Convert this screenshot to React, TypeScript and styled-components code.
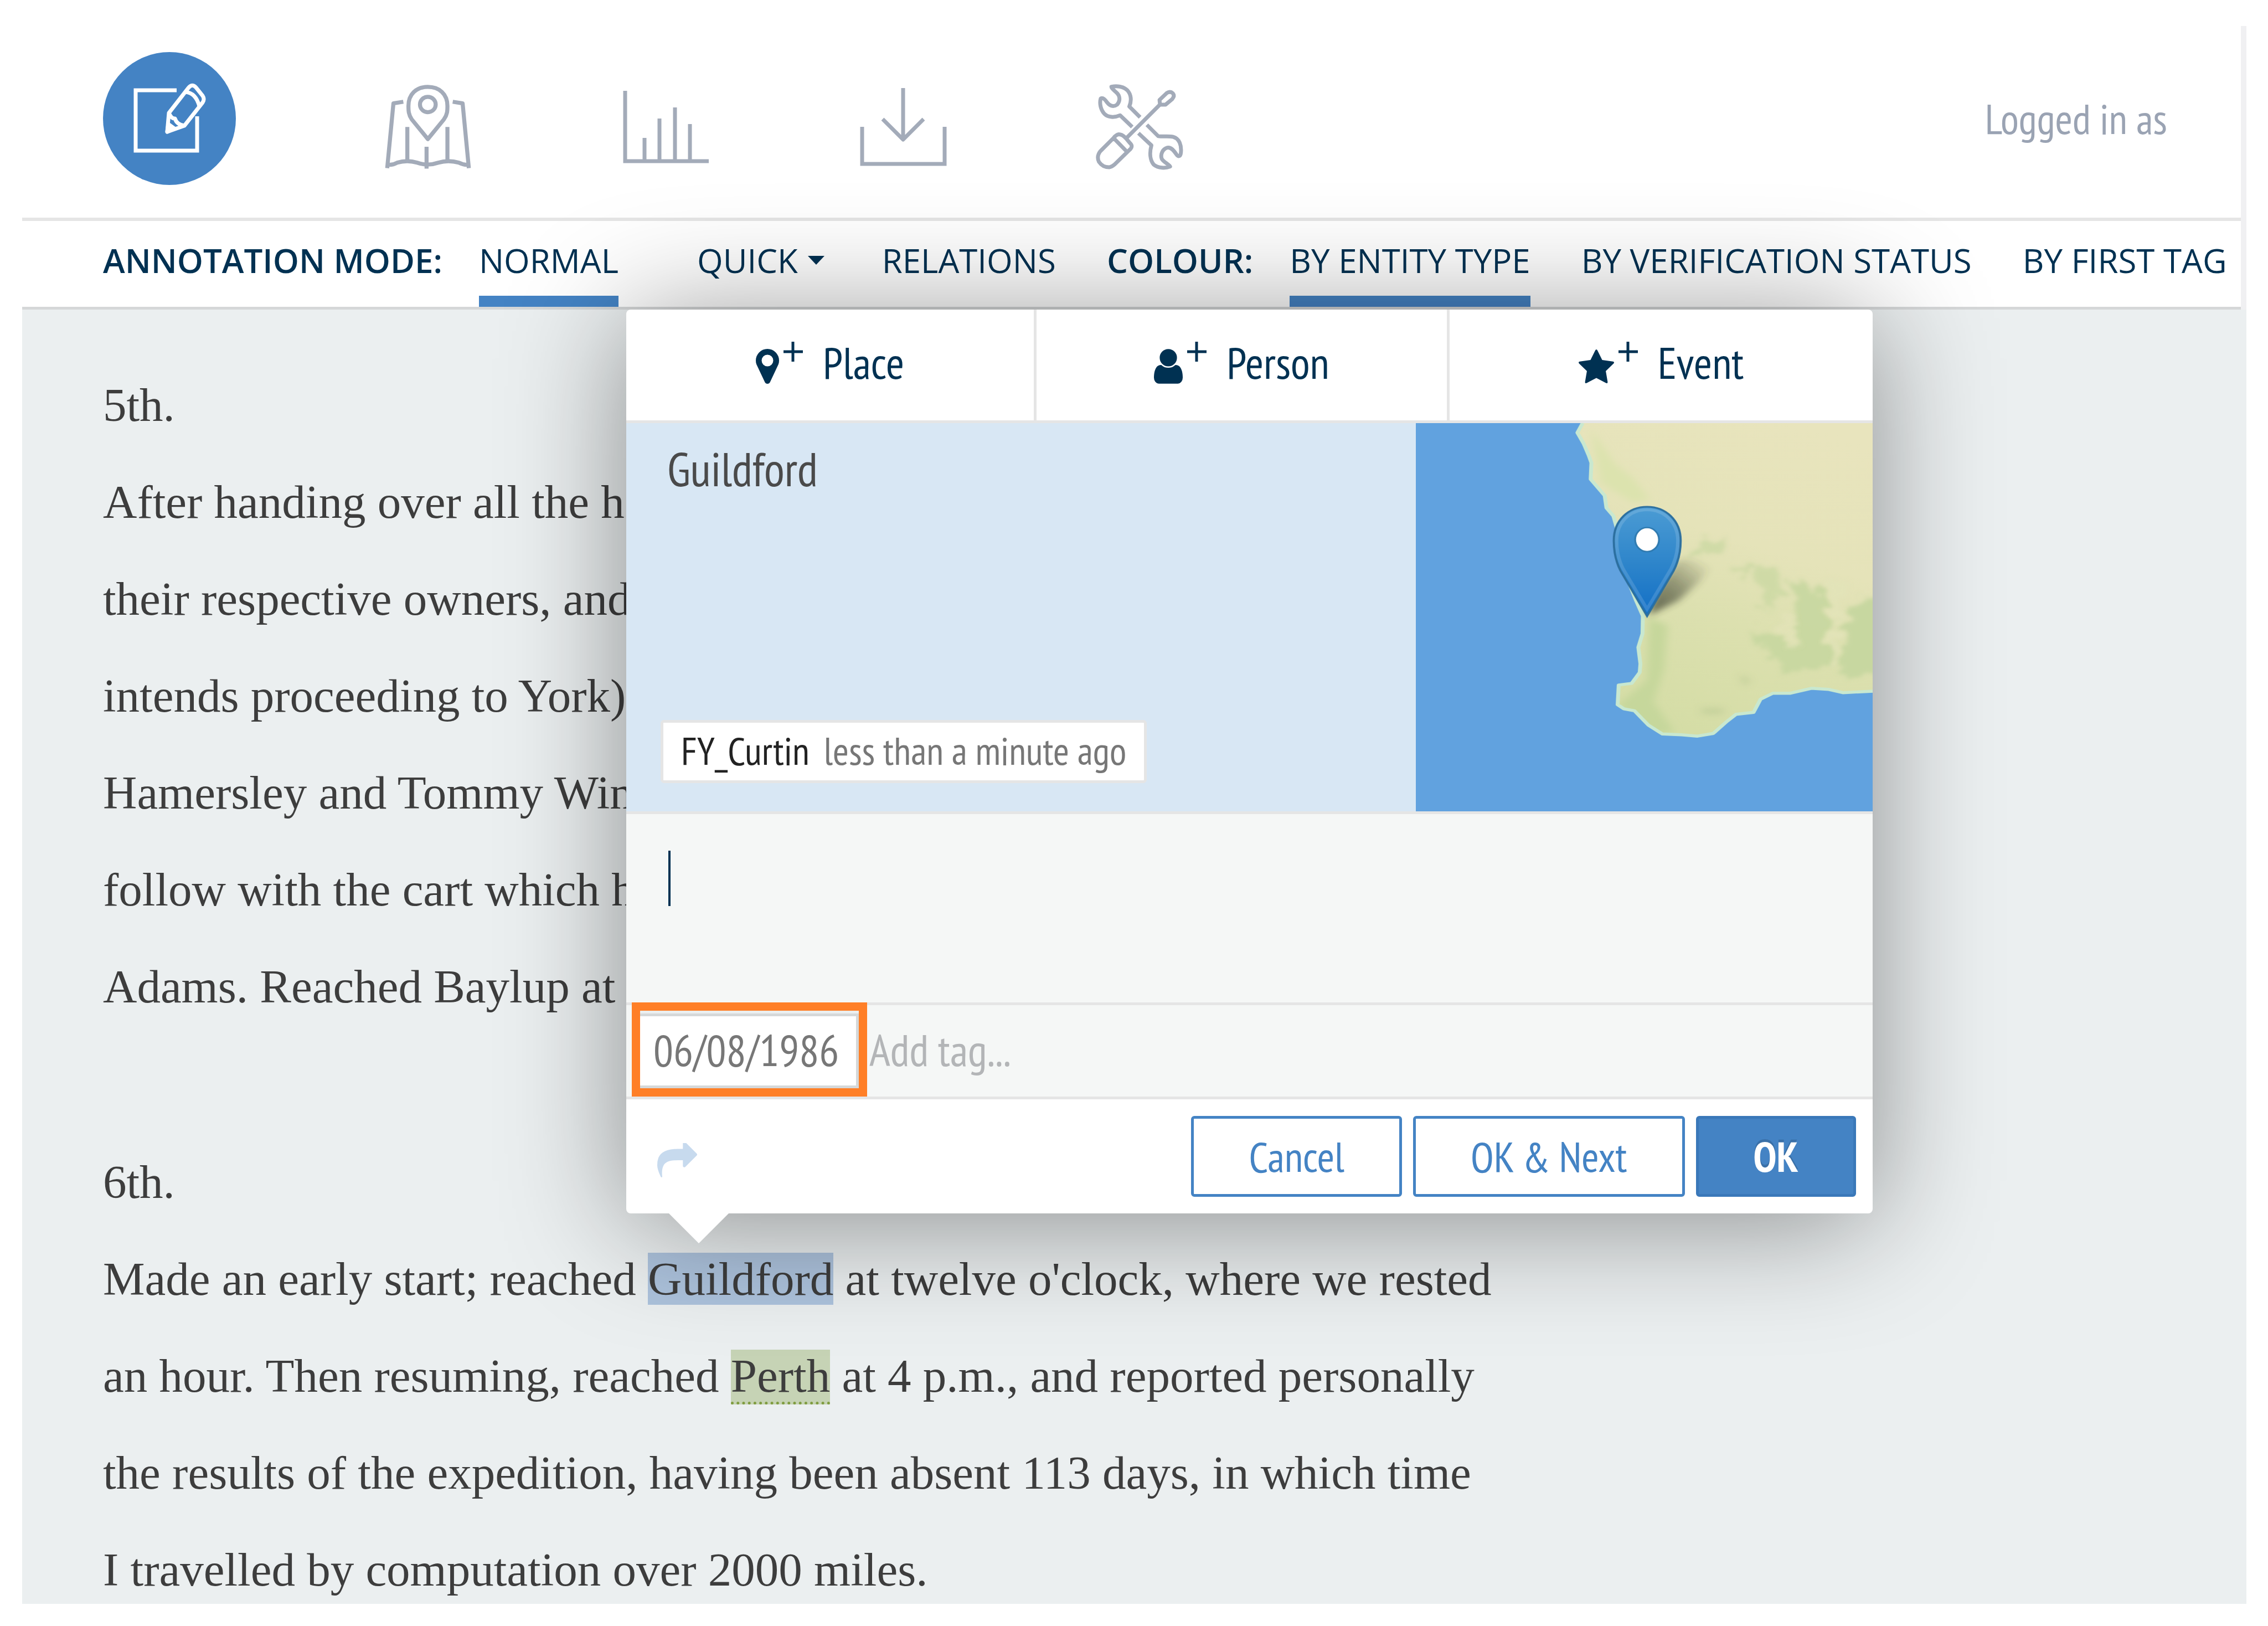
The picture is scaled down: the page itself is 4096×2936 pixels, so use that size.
import React from 'react';
import styled, { createGlobalStyle, css } from 'styled-components';

const navy = '#003152';
const blue = '#4483c4';
const iconGrey = '#a3abb9';
const rule = '#e5e5e5';
const canvasBg = '#ebeff0';
const narrow = '"PT Sans Narrow", "Roboto Condensed", sans-serif';
const humanist = '"Open Sans", sans-serif';

const Global = createGlobalStyle`
  *, *::before, *::after { box-sizing: border-box; }
  body { margin: 0; background: #fff; }
  button, input, textarea { font: inherit; margin: 0; border-radius: 0; }
`;

const Page = styled.div`
  display: flex;
  flex-direction: column;
  height: 100vh;
  padding: 47px 39px 40px 40px;
  background: #fff;
`;

const Shell = styled.div`
  display: flex;
  flex: 1;
  flex-direction: column;
  min-height: 0;
  border-right: 10px solid #f0f0f2;
`;

const Header = styled.header`
  display: flex;
  align-items: center;
  justify-content: space-between;
  padding: 47px 133px 59px 146px;
  border-bottom: 6px solid ${rule};
`;

const MainNav = styled.nav`
  display: flex;
  gap: 268px;
`;

const NavLink = styled.a<{ $active?: boolean }>`
  display: flex;
  align-items: center;
  justify-content: center;
  height: 240px;
  width: 160px;
  padding-top: 31px;
  color: ${iconGrey};
  ${p =>
    p.$active &&
    css`
      width: 240px;
      padding-top: 0;
      border-radius: 50%;
      background: ${blue};
      color: #fff;
    `}
`;

const Account = styled.span`
  font: 76px/240px ${narrow};
  color: #9aa3b3;
  white-space: nowrap;
`;

const ToolBar = styled.div`
  display: flex;
  gap: 92px;
  padding-left: 146px;
  border-bottom: 5px solid #d5d7d8;
  font: 60px/128px ${humanist};
  color: ${navy};
  white-space: nowrap;
`;

const ToolGroup = styled.div`
  display: flex;
  gap: 92px;
`;

const ToolLabel = styled.span`
  padding-top: 7px;
  margin-right: -26px;
  font-weight: 600;
`;

const ToolItem = styled.a<{ $active?: boolean }>`
  height: 155px;
  padding-top: 7px;
  border-bottom: 20px solid ${p => (p.$active ? blue : 'transparent')};
  color: inherit;
  text-decoration: none;
`;

const ToolMenu = styled.button`
  display: flex;
  align-items: center;
  gap: 18px;
  height: 135px;
  padding: 7px 12px 0 50px;
  border: 0;
  background: none;
  color: inherit;
`;

const Workspace = styled.main`
  position: relative;
  display: flex;
  flex: 1;
  min-height: 0;
  margin-right: -10px;
`;

const Document = styled.article`
  flex: 1;
  overflow: hidden;
  padding: 85px 146px 0;
  background: ${canvasBg};
  font: 85px/175px "Liberation Serif", "Times New Roman", serif;
  color: #3d3d3d;
  white-space: nowrap;
`;

const Entry = styled.p`
  margin: 0 0 178px;
`;

const Selection = styled.span`
  background: #adc3dd;
`;

const PlaceMark = styled.span`
  background: #c6d3b5;
  border-bottom: 5px dotted #7f9c40;
`;

const Popup = styled.section`
  position: absolute;
  top: 0;
  left: 1091px;
  width: 2251px;
  border-radius: 8px;
  background: #fff;
  box-shadow: 0 15px 220px rgba(0, 0, 0, 0.42);
  font: 80px/100px ${narrow};
  color: ${navy};
  white-space: nowrap;
`;

const Pointer = styled.span`
  position: absolute;
  top: 100%;
  left: 77px;
  border: 54px solid transparent;
  border-top-color: #fff;
  border-bottom-width: 0;
`;

const Tabs = styled.div`
  display: grid;
  grid-template-columns: 741fr 746fr 764fr;
  border-bottom: 5px solid ${rule};
`;

const Tab = styled.button`
  display: flex;
  align-items: center;
  justify-content: center;
  height: 200px;
  padding: 0 0 9px;
  border: 0;
  border-right: 5px solid ${rule};
  background: none;
  color: inherit;
  &:last-child { border-right: 0; }
`;

const TabGlyph = styled.span`
  display: flex;
  align-items: flex-end;
  gap: 8px;
  height: 76px;
  margin-right: 36px;
`;

const PlusGlyph = styled.svg`
  align-self: flex-start;
`;

const PlacePanel = styled.div`
  display: flex;
  border-bottom: 5px solid ${rule};
  background: #d8e7f4;
`;

const PlaceInfo = styled.div`
  display: flex;
  flex: 1;
  flex-direction: column;
  align-items: flex-start;
  justify-content: space-between;
  padding: 32px 62px 51px;
`;

const Quote = styled.span`
  padding-left: 12px;
  font-size: 85px;
  color: #4a4a4a;
`;

const Stamp = styled.div`
  display: flex;
  gap: 26px;
  padding: 0 32px 4px;
  border: 5px solid ${rule};
  border-radius: 6px;
  background: #fff;
  font-size: 70px;
  color: #777;
`;

const Author = styled.span`
  color: #222;
`;

const Comment = styled.label`
  display: flex;
  height: 345px;
  padding: 66px 76px;
  border-bottom: 5px solid ${rule};
  background: #f5f7f6;
`;

const Caret = styled.span`
  width: 4px;
  height: 100px;
  background: ${navy};
`;

const CommentBox = styled.textarea`
  flex: 1;
  border: 0;
  outline: 0;
  padding: 0;
  resize: none;
  background: none;
  color: inherit;
`;

const TagRow = styled.div`
  display: flex;
  height: 170px;
  padding-left: 10px;
  border-bottom: 5px solid ${rule};
  background: #f5f7f6;
`;

const TagFrame = styled.div`
  width: 425px;
  height: 170px;
  margin-top: -5px;
  padding-top: 5px;
  border: 15px solid #ff7f27;
  background: ${canvasBg};
`;

const Tag = styled.span`
  display: block;
  padding: 0 0 4px 24px;
  border: 5px solid #d5d8d9;
  border-left: 0;
  background: #fff;
  line-height: 121px;
  color: #777;
`;

const TagInput = styled.input`
  flex: 1;
  min-width: 0;
  padding: 0 4px 4px;
  border: 0;
  outline: 0;
  background: none;
  &::placeholder { color: #b3b5b7; opacity: 1; }
`;

const Footer = styled.footer`
  display: flex;
  align-items: center;
  gap: 20px;
  padding: 30px;
`;

const ReplyButton = styled.button`
  display: flex;
  margin-right: auto;
  padding: 13px 26px 0;
  border: 0;
  background: none;
  color: #c7daee;
`;

const Action = styled.button<{ $primary?: boolean }>`
  height: 146px;
  padding: 0 99px;
  border: 5px solid ${blue};
  border-radius: 6px;
  background: #fff;
  color: ${blue};
  font-size: 76px;
  white-space: nowrap;
  ${p =>
    p.$primary &&
    css`
      border-color: #3a78b9;
      background: ${blue};
      color: #fff;
      font-weight: 700;
      text-shadow: 0 -5px 0 #3a70a8;
    `}
`;

const Line = ({ size = 160, box = '0 0 160 160', width = 7, children }: any) => (
  <svg width={size} height={size} viewBox={box} fill="none" stroke="currentColor" strokeWidth={width} strokeLinejoin="round">
    {children}
  </svg>
);

const EditIcon = () => (
  <Line size={240} box="0 0 240 240">
    <path d="M133 69H59V178H170V116" strokeLinejoin="miter" />
    <path d="M116 144L119 110L154 65Q161 56 168 64L180 79Q184 85 180 91L147 133Z" />
    <path d="M119 110Q124 121 130 120Q133 131 147 133M149 72Q168 74 174 98" />
    <path d="M116 144L118 130L129 138Z" fill="currentColor" />
  </Line>
);

const MapIcon = () => (
  <Line box="60 90 484 484" width={22}>
    <path d="M298 396L210 288C192 262 192 240 192 215C192 150 235 111 298 111C361 111 405 150 405 215C405 240 405 262 386 288Z" />
    <ellipse cx="298" cy="207" rx="43" ry="42" />
    <path d="M164 192L110 201L76 555M434 192L488 201L522 555" />
    <path d="M73 535Q104 540 130 525Q185 508 240 525Q298 545 355 525Q410 508 468 525Q496 540 525 535" />
    <path d="M186 330V515M405 330V515M291 438V557" />
  </Line>
);

const ChartIcon = () => (
  <Line>
    <path d="M7 14V141H158" strokeLinejoin="miter" />
    <path d="M42 99V140M69 64V140M97 44V140M124 74V140" />
  </Line>
);

const DownloadIcon = () => (
  <Line>
    <path d="M7 79V146H156V79" strokeLinejoin="miter" />
    <path d="M81 9V101M44 65L81 102L118 65" />
  </Line>
);

const ToolsIcon = () => (
  <Line box="136 90 484 484" width={21}>
    <path d="M381 277L322 218C336 185 332 152 312 130C290 108 255 104 224 110C224 122 242 130 258 148C274 168 270 192 255 208C236 222 216 216 200 195C190 180 178 168 166 174C158 202 166 236 186 258C206 278 240 280 272 266L338 330" />
    <path d="M418 318L480 380C510 384 535 378 562 384C596 394 608 430 604 470C602 492 590 494 580 480C566 460 550 438 530 443C504 450 490 480 500 505C512 524 534 530 545 546C520 556 480 556 455 535C435 510 432 470 443 430L372 364" />
    <path d="M305 392L492 205" />
    <path d="M490 208L487 182L526 145Q545 132 560 146Q572 160 556 178L520 208Z" />
    <path d="M265 370Q250 372 236 390L164 462Q142 490 156 520Q176 550 212 550Q226 548 240 536L322 456Q346 436 326 418L304 392Q284 370 265 370ZM238 392L308 464" />
  </Line>
);

const Plus = () => (
  <PlusGlyph width="35" height="36" viewBox="0 0 35 36" stroke={navy} strokeWidth="5" aria-hidden>
    <path d="M0 18H35M17 0V36" />
  </PlusGlyph>
);

const markerPath =
  'M1152 640q0-106-75-181t-181-75-181 75-75 181 75 181 181 75 181-75 75-181zm256 0q0 109-33 179l-364 774q-16 33-47.5 52t-67.5 19-67.5-19-46.5-52l-365-774q-33-70-33-179 0-212 150-362t362-150 362 150 150 362z';
const userPath =
  'M1536 1399q0 109-62.5 187t-150.5 78h-854q-88 0-150.5-78t-62.5-187q0-85 8.5-160.5t31.5-152 58.5-131 94-89 134.5-34.5q131 128 313 128t313-128q76 0 134.5 34.5t94 89 58.5 131 31.5 152 8.5 160.5zm-256-887q0 159-112.5 271.5t-271.5 112.5-271.5-112.5-112.5-271.5 112.5-271.5 271.5-112.5 271.5 112.5 112.5 271.5z';
const starPath =
  'M1728 647q0 22-26 48l-363 354 86 500q1 7 1 20 0 21-10.5 35.5t-30.5 14.5q-19 0-40-12l-449-236-449 236q-22 12-40 12-21 0-31.5-14.5t-10.5-35.5q0-6 2-20l86-500-364-354q-25-27-25-48 0-37 56-46l502-73 225-455q19-41 49-41t49 41l225 455 502 73q56 9 56 46z';
const sharePath =
  'M1792 640q0 26-19 45l-512 512q-19 19-45 19t-45-19-19-45v-256h-224q-98 0-175.5 6t-154 21.5-133 42.5-105.5 69.5-80 101-48.5 138.5-17.5 181q0 55 5 123 0 6 2.5 23.5t2.5 26.5q0 15-8.5 25t-23.5 10q-16 0-28-17-7-9-13-22t-13.5-30-10.5-24q-127-285-127-451 0-199 53-333 162-403 875-403h224v-256q0-26 19-45t45-19 45 19l512 512q19 19 19 45z';

const Solid = ({ w, h, box, d }: { w: number; h: number; box: string; d: string }) => (
  <svg width={w} height={h} viewBox={box} fill="currentColor" aria-hidden>
    <path d={d} />
  </svg>
);

const tabs = [
  { name: 'Place', icon: <Solid w={42} h={63} box="384 128 1024 1536" d={markerPath} /> },
  { name: 'Person', icon: <Solid w={52} h={63} box="256 128 1280 1536" d={userPath} /> },
  { name: 'Event', icon: <Solid w={64} h={63} box="64 32 1664 1587" d={starPath} /> },
];

const coast =
  'M597 60L582 95L600 135L615 180L622 205L620 265L640 295L660 325L665 370L685 400L696 450L705 560L722 620L750 710L769 765L768 830L756 880L762 940L760 972L737 1012L700 1018L697 1090L715 1105L745 1112L785 1165L825 1197L880 1200L925 1205L970 1195L1010 1150L1035 1125L1085 1118L1105 1070L1140 1048L1190 1048L1250 1030L1300 1034L1340 1046L1435 1040';

const CoastMap = () => (
  <svg width="825" height="701" viewBox="121 60 1304 1420" preserveAspectRatio="none" role="img" aria-label="Map of Guildford">
    <defs>
      <linearGradient id="land" x1="0.75" y1="0" x2="0.45" y2="1">
        <stop offset="0" stopColor="#e8e4bd" />
        <stop offset="0.4" stopColor="#e5e3b9" />
        <stop offset="0.65" stopColor="#dce0af" />
        <stop offset="1" stopColor="#d5dda6" />
      </linearGradient>
      <linearGradient id="pin" x1="0" y1="0" x2="0" y2="1">
        <stop offset="0" stopColor="#4c9cd4" />
        <stop offset="0.5" stopColor="#2f86cb" />
        <stop offset="1" stopColor="#126fc6" />
      </linearGradient>
      <linearGradient id="cast" x1="0" y1="1" x2="0.9" y2="0">
        <stop offset="0" stopColor="#3c4030" stopOpacity="0.8" />
        <stop offset="0.5" stopColor="#3c4030" stopOpacity="0.5" />
        <stop offset="1" stopColor="#3c4030" stopOpacity="0" />
      </linearGradient>
      <filter id="soft" x="-30%" y="-30%" width="160%" height="160%">
        <feGaussianBlur stdDeviation="12" />
      </filter>
      <filter id="rough" x="-20%" y="-20%" width="140%" height="140%">
        <feTurbulence type="fractalNoise" baseFrequency="0.025" numOctaves="4" seed="7" />
        <feDisplacementMap in="SourceGraphic" scale="90" xChannelSelector="R" yChannelSelector="G" />
        <feGaussianBlur stdDeviation="7" />
      </filter>
      <clipPath id="shore">
        <path d={coast + 'V60Z'} />
      </clipPath>
    </defs>
    <rect x="121" y="60" width="1304" height="1420" fill="#61a2df" />
    <path d={coast + 'V60Z'} fill="url(#land)" />
    <g clipPath="url(#shore)">
      <path d="M620 80L650 280L740 350L790 340L740 260L690 210Z" fill="#dce3ae" filter="url(#soft)" />
      <path d="M785 770L840 800L830 960L800 1080L860 1190L800 1200L700 1090L780 1000Z" fill="#c6d79b" filter="url(#soft)" />
      <g fill="#c7d7a0" filter="url(#rough)">
        <path d="M1080 570L1150 590L1170 690L1120 740Z" opacity="0.7" />
        <path d="M1200 640L1290 670L1310 940L1180 980L1070 810L1150 830L1210 880Z" opacity="0.9" />
        <path d="M1345 760L1460 650V990L1340 990Z" />
        <path d="M930 500L1000 480L1010 530L930 540Z" opacity="0.7" />
        <path d="M1020 590L1080 560L1060 620Z" opacity="0.7" />
      </g>
      <g fill="#bfcd98" filter="url(#soft)">
        <path d="M935 1105H998V1122H940Z" />
        <path d="M1045 980L1075 1000L1060 1020Z" />
      </g>
      <g fill="#e2e3b8" filter="url(#rough)">
        <path d="M1150 780L1200 760L1220 880L1180 880Z" opacity="0.7" />
        <path d="M1300 640L1350 640L1320 800L1330 940L1310 930Z" />
      </g>
    </g>
    <path d={coast} fill="none" stroke="#c8e8d0" strokeWidth="11" strokeLinejoin="round" />
    <path d="M784 764L805 680L870 560L920 560L960 590L930 640L870 710Z" fill="url(#cast)" filter="url(#soft)" />
    <path
      d="M781 766L705 600C690 562 686 525 686 490C686 415 728 366 781 366C834 366 877 415 877 490C877 525 872 562 857 600Z"
      fill="url(#pin)"
      stroke="#2c6f9f"
      strokeWidth="6"
    />
    <path
      d="M781 740L713 594C699 560 694 525 694 490C694 423 732 377 781 377C830 377 869 423 869 490C869 525 863 560 849 594Z"
      fill="none"
      stroke="#fff"
      strokeOpacity="0.14"
      strokeWidth="10"
    />
    <ellipse cx="781" cy="486" rx="34" ry="44" fill="#fff" stroke="#2f7ab0" strokeWidth="5" />
  </svg>
);

export default function App() {
  return (
    <>
      <Global />
      <Page>
        <Shell>
          <Header>
            <MainNav aria-label="Views">
              <NavLink href="#annotate" aria-label="Annotate" $active><EditIcon /></NavLink>
              <NavLink href="#map" aria-label="Map"><MapIcon /></NavLink>
              <NavLink href="#stats" aria-label="Statistics"><ChartIcon /></NavLink>
              <NavLink href="#download" aria-label="Download"><DownloadIcon /></NavLink>
              <NavLink href="#settings" aria-label="Settings"><ToolsIcon /></NavLink>
            </MainNav>
            <Account>Logged in as</Account>
          </Header>

          <ToolBar>
            <ToolGroup>
              <ToolLabel>ANNOTATION MODE:</ToolLabel>
              <ToolItem href="#normal" $active>NORMAL</ToolItem>
              <ToolMenu type="button">
                QUICK
                <svg width="30" height="16" viewBox="0 0 30 16" fill="currentColor" aria-hidden>
                  <path d="M0 0H30L15 16Z" />
                </svg>
              </ToolMenu>
              <ToolItem href="#relations">RELATIONS</ToolItem>
            </ToolGroup>
            <ToolGroup>
              <ToolLabel>COLOUR:</ToolLabel>
              <ToolItem href="#entity" $active>BY ENTITY TYPE</ToolItem>
              <ToolItem href="#status">BY VERIFICATION STATUS</ToolItem>
              <ToolItem href="#tag">BY FIRST TAG</ToolItem>
            </ToolGroup>
          </ToolBar>

          <Workspace>
            <Document>
              <Entry>
                5th.<br />
                After handing over all the horses<br />
                their respective owners, and<br />
                intends proceeding to York)<br />
                Hamersley and Tommy Windich<br />
                follow with the cart which had<br />
                Adams. Reached Baylup at
              </Entry>
              <Entry>
                6th.<br />
                Made an early start; reached <Selection>Guildford</Selection> at twelve o'clock, where we rested<br />
                an hour. Then resuming, reached <PlaceMark>Perth</PlaceMark> at 4 p.m., and reported personally<br />
                the results of the expedition, having been absent 113 days, in which time<br />
                I travelled by computation over 2000 miles.
              </Entry>
            </Document>

            <Popup aria-label="Annotation">
              <Tabs>
                {tabs.map(t => (
                  <Tab key={t.name} type="button">
                    <TabGlyph>{t.icon}<Plus /></TabGlyph>
                    {t.name}
                  </Tab>
                ))}
              </Tabs>
              <PlacePanel>
                <PlaceInfo>
                  <Quote>Guildford</Quote>
                  <Stamp>
                    <Author>FY_Curtin</Author>
                    <span>less than a minute ago</span>
                  </Stamp>
                </PlaceInfo>
                <CoastMap />
              </PlacePanel>
              <Comment>
                <Caret />
                <CommentBox aria-label="Comment" />
              </Comment>
              <TagRow>
                <TagFrame><Tag>06/08/1986</Tag></TagFrame>
                <TagInput aria-label="Add tag" placeholder="Add tag..." />
              </TagRow>
              <Footer>
                <ReplyButton type="button" aria-label="Reply">
                  <Solid w={72} h={62} box="0 128 1792 1536" d={sharePath} />
                </ReplyButton>
                <Action type="button">Cancel</Action>
                <Action type="button">OK &amp; Next</Action>
                <Action type="button" $primary>OK</Action>
              </Footer>
              <Pointer />
            </Popup>
          </Workspace>
        </Shell>
      </Page>
    </>
  );
}
